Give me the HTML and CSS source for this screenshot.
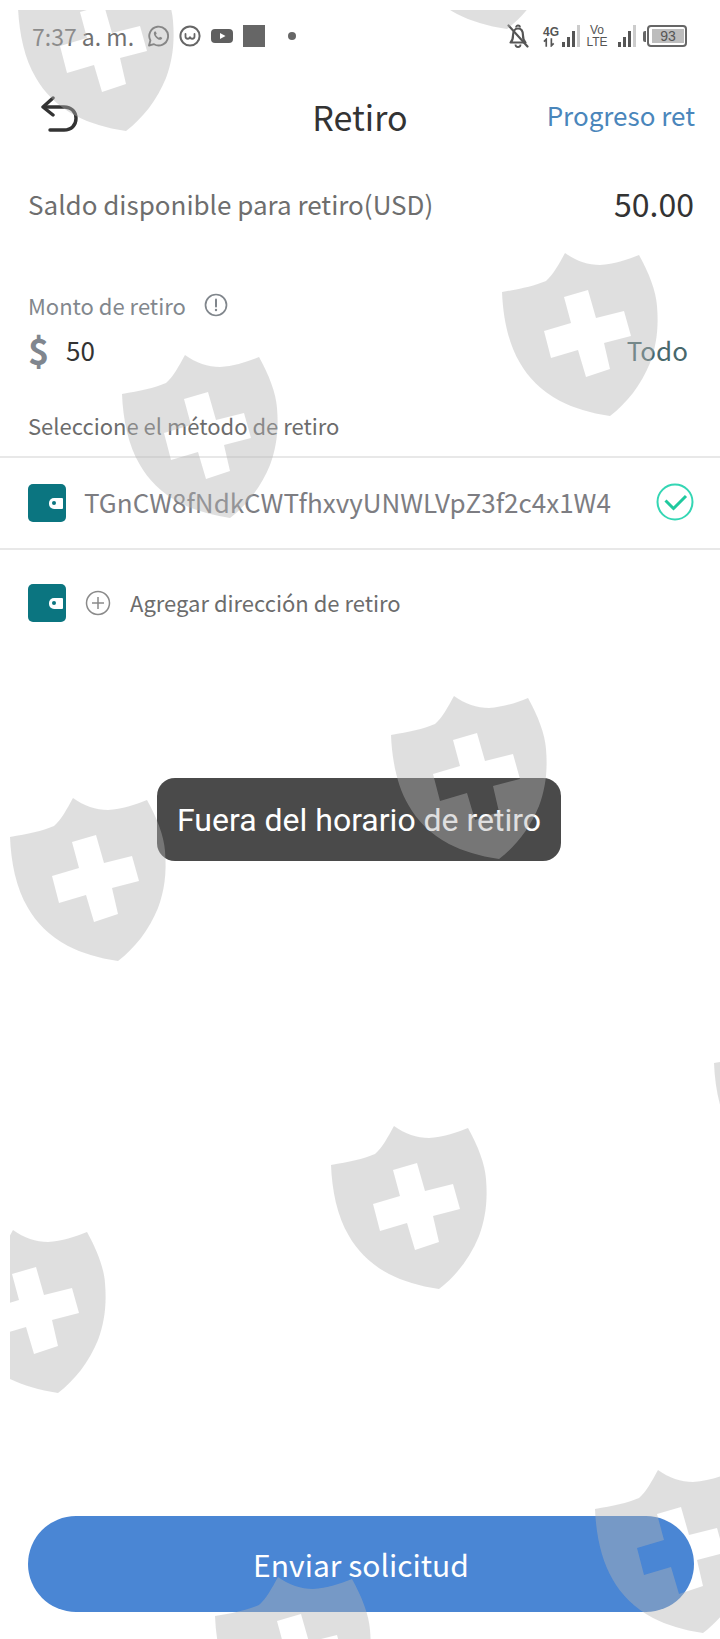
FILE: index.html
```html
<!DOCTYPE html>
<html lang="es">
<head>
<meta charset="utf-8">
<title>Retiro</title>
<link rel="stylesheet" href="styles.css">
</head>
<body>
<div class="screen">
  <div class="status">
    <div class="status-left">
      <span class="time">7:37 a. m.</span>
      <svg class="si si-wa" viewBox="0 0 22 22"><path d="M2 20.5l1.4-5A9.4 9.4 0 1 1 7 19.2z" fill="none" stroke="#666" stroke-width="1.9" stroke-linejoin="round"/><path d="M7.6 6.4c-1.3 1.2-.9 3.2.6 5.3 1.7 2.3 4 3.6 5.7 3 1-.4 1.5-1.2 1.3-1.9l-2.2-1.1-1 1.1c-1.400-.6-2.500-1.700-3.200-3.100l.9-1-.9-2.300z" fill="#666"/></svg>
      <svg class="si si-w" viewBox="0 0 22 22"><circle cx="11" cy="11" r="9.600" fill="none" stroke="#666" stroke-width="2"/><path d="M6.500 9v2.500c0 3 4.500 3 4.500 0 0 3 4.500 3 4.500 0V9" fill="none" stroke="#666" stroke-width="1.800" stroke-linecap="round"/></svg>
      <svg class="si si-yt" viewBox="0 0 22 14"><rect width="22" height="14" rx="4" fill="#5f5f5f"/><path d="M9 4l5.500 3L9 10z" fill="#fff"/></svg>
      <span class="si-square"></span>
      <span class="si-dot"></span>
    </div>
    <div class="status-right">
      <svg class="si si-bell" viewBox="0 0 22 24"><path d="M3.500 18.500c1.800-1.500 2.500-3 2.500-7C6 7 8 4.500 11 4.500s5 2.500 5 7c0 4 .7 5.500 2.500 7z" fill="none" stroke="#555" stroke-width="2.200" stroke-linejoin="round"/><path d="M9 3.500a2 2 0 0 1 4 0M8.500 20.500a2.500 2.500 0 0 0 5 0" fill="none" stroke="#555" stroke-width="1.800"/><path d="M1.500 1.500l19 21" stroke="#555" stroke-width="2.200" stroke-linecap="round"/></svg>
      <span class="net net-4g"><span>4G</span><svg class="net-arrows" viewBox="0 0 14 9"><path d="M3.500 9V1L1 3.500M9 0v8l2.500-2.500" fill="none" stroke="#555" stroke-width="1.800"/></svg></span>
      <span class="bars bars-a"><i class="b1"></i><i class="b2"></i><i class="b3"></i><i class="b4"></i></span>
      <span class="net net-lte"><span>Vo</span><span>LTE</span></span>
      <span class="bars bars-b"><i class="b1"></i><i class="b2"></i><i class="b3"></i><i class="b4"></i></span>
      <span class="battery"><span class="battery-nub"></span><span class="battery-body"><span class="battery-fill">93</span></span></span>
    </div>
  </div>

  <header class="topbar">
    <svg class="back" viewBox="0 0 38 38"><path d="M13 2L3 11l10 8" fill="none" stroke="#333" stroke-width="3.400" stroke-linecap="round" stroke-linejoin="round"/><path d="M5 11h19c7.500 0 12 5 12 11.500S31.500 34 24 34H10" fill="none" stroke="#333" stroke-width="3.400" stroke-linecap="round"/></svg>
    <h1 class="title">Retiro</h1>
    <a class="progress">Progreso ret</a>
  </header>

  <div class="balance">
    <span class="balance-label">Saldo disponible para retiro(USD)</span>
    <span class="balance-value">50.00</span>
  </div>

  <div class="amount-label">
    <span>Monto de retiro</span>
    <svg class="info" viewBox="0 0 24 24"><circle cx="12" cy="12" r="10.500" fill="none" stroke="#80868c" stroke-width="1.700"/><path d="M12 6.500v7" stroke="#80868c" stroke-width="2" stroke-linecap="round"/><circle cx="12" cy="17" r="1.200" fill="#80868c"/></svg>
  </div>
  <div class="amount">
    <span class="dollar">$</span>
    <span class="amount-value">50</span>
    <span class="all">Todo</span>
  </div>

  <div class="method-label">Seleccione el método de retiro</div>

  <div class="row row-address">
    <span class="wallet"><span class="wallet-flap"></span></span>
    <span class="address">TGnCW8fNdkCWTfhxvyUNWLVpZ3f2c4x1W4</span>
    <svg class="check" viewBox="0 0 38 38"><circle cx="19" cy="19" r="17.500" fill="none" stroke="#34d6b4" stroke-width="2"/><path d="M9.500 17.500l8 8 12.500-12.500" fill="none" stroke="#1fc99e" stroke-width="3"/></svg>
  </div>

  <div class="row row-add">
    <span class="wallet"><span class="wallet-flap"></span></span>
    <svg class="plus" viewBox="0 0 26 26"><circle cx="13" cy="13" r="11.500" fill="none" stroke="#8a8a8a" stroke-width="1.500"/><path d="M13 7v12M7 13h12" stroke="#8a8a8a" stroke-width="1.500"/></svg>
    <span class="add-text">Agregar dirección de retiro</span>
  </div>

  <button class="submit">Enviar solicitud</button>

  <div class="toast">Fuera del horario de retiro</div>

  <svg class="watermark" viewBox="10 10 710 1629" aria-hidden="true">
    <defs>
      <path id="shield" fill-rule="evenodd" d="M63 0C74 8 86 12 98 12 112 11 125 7 137 2 147 20 154 38 155 53 157 76 154 94 148 110 139 132 125 150 108 163 88 160 72 155 58 148 39 138 26 124 18 110 6 90 1 64 0 39 18 36 32 33 44 28 51 22 57 11 63 0ZM62 44L86 37 94 65 122 58 129 83 102 90 108 116 84 124 76 97 49 105 42 78 69 70Z"/>
    </defs>
    <use href="#shield" x="18" y="-32"/>
    <use href="#shield" x="399" y="-134"/>
    <use href="#shield" x="502" y="253"/>
    <use href="#shield" x="122" y="355"/>
    <use href="#shield" x="391" y="696"/>
    <use href="#shield" x="10" y="798"/>
    <use href="#shield" x="714" y="1024"/>
    <use href="#shield" x="331" y="1126"/>
    <use href="#shield" x="-50" y="1230"/>
    <use href="#shield" x="595" y="1470"/>
    <use href="#shield" x="215" y="1577"/>
  </svg>
</div>
</body>
</html>
```
FILE: styles.css
```css
* { box-sizing: border-box; }
html, body { margin: 0; padding: 0; background: #fff; }
body { font-family: "Noto Sans CJK SC", "Noto Sans", sans-serif; }
.screen {
  position: relative;
  width: 720px;
  height: 1639px;
  overflow: hidden;
  display: flex;
  flex-direction: column;
  background: #fff;
}

/* status bar */
.status {
  height: 72px;
  padding: 0 33px 0 32px;
  display: flex;
  align-items: center;
  justify-content: space-between;
  color: #666;
}
.status-left, .status-right { display: flex; align-items: center; }
.time { font-size: 23px; line-height: 30px; width: 115px; color: #707070; white-space: nowrap; }
.si { display: block; flex: none; }
.si-wa { width: 22px; height: 22px; }
.si-w { width: 22px; height: 22px; margin-left: 10px; }
.si-yt { width: 22px; height: 14px; margin-left: 10px; }
.si-square { width: 22px; height: 22px; margin-left: 10px; background: #666; }
.si-dot { width: 8px; height: 8px; margin-left: 23px; border-radius: 50%; background: #666; }
.si-bell { width: 22px; height: 24px; }
.net {
  display: flex;
  flex-direction: column;
  font-family: "Liberation Sans", sans-serif;
  font-size: 12px;
  line-height: 12px;
  color: #555;
  align-items: flex-start;
  flex: none;
}
.net-4g { margin-left: 14px; width: 18px; font-weight: 700; }
.net-arrows { display: block; width: 13px; height: 9px; }
.net-lte { margin-left: 7px; width: 20px; align-items: center; }
.bars { display: flex; align-items: flex-end; gap: 2px; height: 22px; flex: none; }
.bars i { display: block; width: 3px; background: #555; }
.bars .b1 { height: 5px; }
.bars .b2 { height: 10px; }
.bars .b3 { height: 16px; }
.bars .b4 { height: 22px; background: #ccc; }
.bars-a { margin-left: 1px; }
.bars-b { margin-left: 11px; }
.battery { display: flex; align-items: center; margin-left: 7px; }
.battery-nub { width: 3px; height: 11px; background: #666; border-radius: 2px 0 0 2px; margin-right: 1px; }
.battery-body {
  width: 40px;
  height: 22px;
  border: 2px solid #666;
  border-radius: 4px;
  padding: 2px 1px 2px 3px;
  display: flex;
}
.battery-fill {
  flex: 1;
  background: #bdbdbd;
  font-family: "Liberation Sans", sans-serif;
  font-size: 14px;
  line-height: 14px;
  text-align: center;
  color: #555;
}

/* header */
.topbar {
  height: 90px;
  padding: 0 25px;
  display: grid;
  grid-template-columns: 1fr auto 1fr;
  align-items: center;
}
.back { width: 38px; height: 38px; display: block; margin: -4px 0 0 15px; }
.title {
  margin: 0;
  font-size: 34px;
  line-height: 44px;
  font-weight: 400;
  color: #333;
}
.progress { justify-self: end; font-size: 26px; line-height: 36px; color: #4a86bb; margin-top: -4px; }

/* balance */
.balance {
  margin-top: 16px;
  padding: 0 26px 0 28px;
  display: flex;
  justify-content: space-between;
  align-items: center;
  height: 50px;
}
.balance-label { font-size: 26px; color: #6e6e6e; }
.balance-value { font-size: 32px; color: #333; }

/* amount */
.amount-label {
  margin-top: 61px;
  padding-left: 28px;
  display: flex;
  align-items: center;
  gap: 18px;
  font-size: 22px;
  line-height: 32px;
  color: #82878d;
}
.info { width: 24px; height: 24px; display: block; }
.amount {
  margin-top: 6px;
  padding: 0 32px 0 28px;
  display: flex;
  align-items: center;
  height: 44px;
}
.dollar { font-size: 36px; font-weight: 700; color: #80868e; width: 38px; }
.amount-value { font-size: 26px; color: #333; flex: 1; }
.all { font-size: 26px; color: #47686c; }

.method-label {
  margin-top: 36px;
  padding-left: 28px;
  height: 49px;
  font-size: 22px;
  line-height: 36px;
  color: #6c6c6c;
}

/* rows */
.row { display: flex; align-items: center; padding: 0 26px 0 28px; }
.row-address {
  height: 94px;
  border-top: 2px solid #e8e8e8;
  border-bottom: 2px solid #e8e8e8;
}
.row-add { height: 106px; }
.wallet {
  position: relative;
  display: block;
  flex: none;
  width: 38px;
  height: 38px;
  border-radius: 5px;
  background: #0b7580;
}
.wallet-flap {
  position: absolute;
  right: 3px;
  top: 14px;
  width: 14px;
  height: 11px;
  border-radius: 5px 1px 1px 5px;
  background: #fff;
}
.wallet-flap::after {
  content: "";
  position: absolute;
  left: 3px;
  top: 3px;
  width: 4px;
  height: 4px;
  border-radius: 50%;
  background: #0b7580;
}
.address { flex: 1; margin: -4px 0 0 18px; font-size: 26px; color: #7d7d82; white-space: nowrap; }
.check { width: 38px; height: 38px; display: block; flex: none; margin-top: -2px; }
.plus { width: 26px; height: 26px; display: block; flex: none; margin-left: 19px; }
.add-text { margin: -2px 0 0 19px; font-size: 22px; color: #6c6c6c; }

/* button */
.submit {
  margin: auto 26px 27px 28px;
  height: 96px;
  border: 0;
  border-radius: 48px;
  background: #4a86d4;
  color: #fff;
  font-family: inherit;
  font-size: 30px;
  padding: 0;
}

/* overlays */
.toast {
  position: absolute;
  left: 157px;
  top: 778px;
  padding: 0 20px;
  height: 83px;
  border-radius: 18px;
  background: #4a4a4a;
  color: #fff;
  font-family: Roboto, sans-serif;
  font-size: 32px;
  line-height: 85px;
  white-space: nowrap;
}
.watermark {
  position: absolute;
  left: 10px;
  top: 10px;
  width: 710px;
  height: 1629px;
  fill: rgba(180, 180, 180, 0.425);
  pointer-events: none;
}
```
